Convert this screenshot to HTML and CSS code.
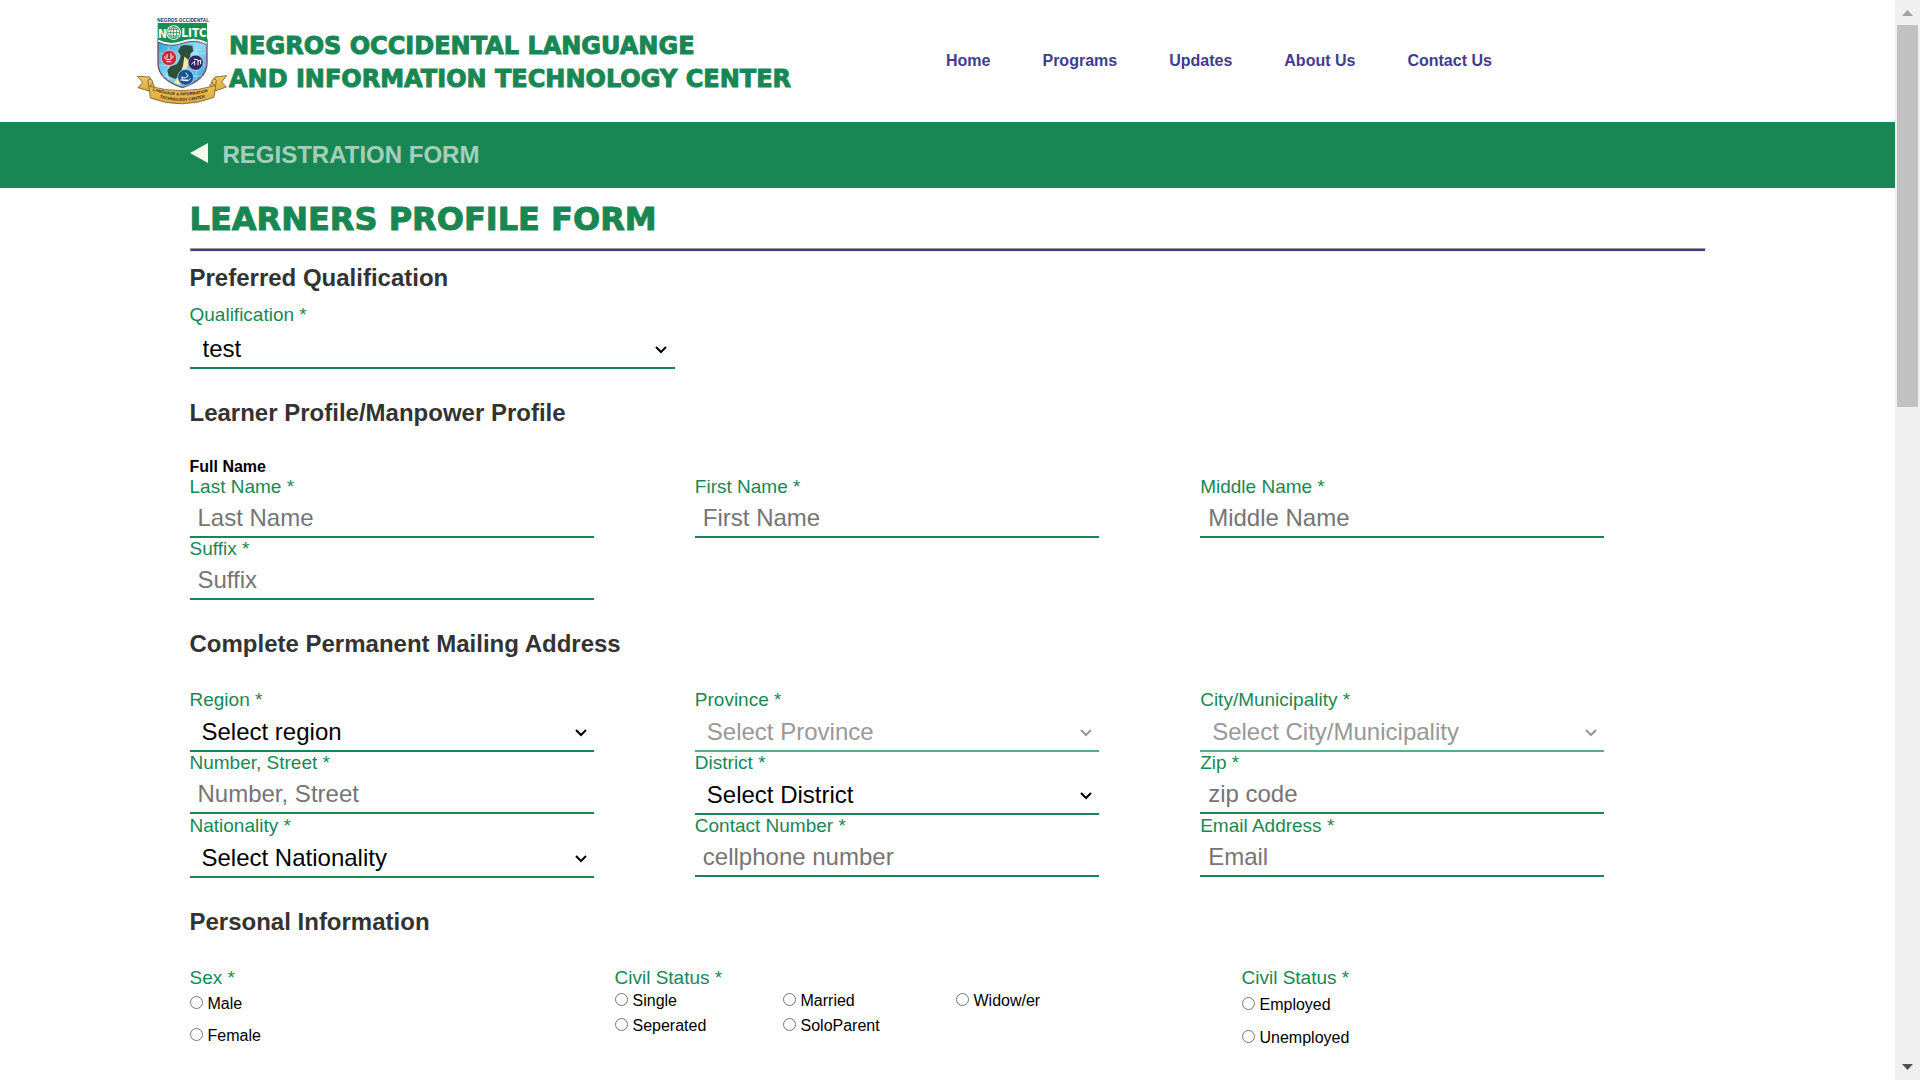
FILE: index.html
```html
<!DOCTYPE html>
<html lang="en">
<head>
<meta charset="utf-8">
<meta name="viewport" content="width=device-width, initial-scale=1">
<title>NOLITC - Registration Form</title>
<link rel="stylesheet" href="styles.css">
</head>
<body>
<header class="site-header">
  <a class="brand" href="#">
    <svg class="brand-logo" viewBox="52 51 270 264" role="img" aria-label="NOLITC seal">
      <defs>
        <linearGradient id="sky" x1="0" y1="0" x2="1" y2="1"><stop offset="0" stop-color="#2a9fd8"/><stop offset=".5" stop-color="#8fdcf5"/><stop offset="1" stop-color="#2196d4"/></linearGradient>
        <linearGradient id="gold" x1="0" y1="0" x2="0" y2="1"><stop offset="0" stop-color="#efc75e"/><stop offset="1" stop-color="#dcab40"/></linearGradient>
        <path id="curve1" d="M95 270Q187 302 282 270"/>
        <path id="curve2" d="M107 289Q187 317 272 287"/>
      </defs>
      <path d="M115 118V190C115 222 137 246 188 263C239 246 262 222 262 190V118Z" fill="url(#sky)" stroke="#77505c" stroke-width="4"/>
      <path d="M119 160H258M119 196H258M128 228H248M146 124V240M180 124V258M230 124V240" stroke="#c4f0fc" stroke-width="1.500" fill="none"/>
      <path d="M183 138L196 135L218 137L221 153L212 161L211 177L197 186L188 203L182 224L167 237L147 229L143 211L153 199L171 193L178 183L183 167L175 154Z" fill="#2c5039"/>
      <path d="M194 170Q207 174 205 192L194 222L178 255L163 249L181 222L189 203Z" fill="#f4eaa2"/>
      <g stroke="#e9eaf0" stroke-width="2">
        <circle cx="148" cy="174" r="23" fill="#c22939"/>
        <circle cx="228" cy="188" r="23" fill="#322863"/>
        <circle cx="198" cy="232" r="24" fill="#18549a"/>
      </g>
      <g fill="none" stroke="#fff" stroke-width="3">
        <path d="M135 169q0 12 13 10t12-12M142 162v13M154 160v15M140 185h15"/>
        <path d="M215 193l10-9v12M223 177l12 3v16M235 184l8-4v13"/>
        <path d="M198 218l8 10-10 6-10-3 5 11h15l6-7M181 240h24"/>
      </g>
      <path d="M114 69H262V128Q225 108 188 123Q150 139 114 120Z" fill="#169052"/>
      <path d="M115 122Q150 140 188 126Q226 112 261 130" fill="none" stroke="#fff" stroke-width="6"/>
      <path d="M115 126Q150 144 188 130Q226 116 261 134" fill="none" stroke="#77505c" stroke-width="3"/>
      <text class="seal-top" x="113" y="65">NEGROS OCCIDENTAL</text>
      <text class="seal-name" x="115" y="114">N</text>
      <text class="seal-name" x="185" y="110">LITC</text>
      <circle cx="162" cy="98" r="22" fill="#fff"/>
      <g fill="none" stroke="#169052" stroke-width="2.500"><circle cx="162" cy="98" r="18"/><ellipse cx="162" cy="98" rx="9" ry="18"/><path d="M144 98h36M162 80v36M148 88h28M148 108h28"/></g>
      <g fill="url(#gold)" stroke="#7b5a2b" stroke-width="2.500" stroke-linejoin="round">
        <path d="M53 229L90 231L104 258L91 274L55 263L69 247Z"/>
        <path d="M321 227L286 231L270 258L284 274L320 261L306 246Z"/>
        <path d="M85 240Q95 232 99 246Q97 255 90 259Q187 286 286 257Q277 252 276 244Q281 232 290 240L283 292Q187 330 92 294Z"/>
      </g>
      <text class="seal-ribbon"><textPath href="#curve1" startOffset="4">LANGUAGE &amp; INFORMATION</textPath></text>
      <text class="seal-ribbon"><textPath href="#curve2" startOffset="14">TECHNOLOGY CENTER</textPath></text>
    </svg>
    <span class="brand-name">NEGROS OCCIDENTAL LANGUANGE<br>AND INFORMATION TECHNOLOGY CENTER</span>
  </a>
  <nav class="site-nav" aria-label="Main">
    <a href="#">Home</a>
    <a href="#">Programs</a>
    <a href="#">Updates</a>
    <a href="#">About Us</a>
    <a href="#">Contact Us</a>
  </nav>
</header>

<div class="title-bar">
  <a class="back" href="#" aria-label="Back"><svg viewBox="0 0 18 20" width="18" height="20"><path d="M0 10L18 0V20Z" fill="#f4f8ef"/></svg></a>
  <span class="title-text">REGISTRATION FORM</span>
</div>

<main>
  <form class="profile-form">
    <h1>LEARNERS PROFILE FORM</h1>
    <hr>
    <h2 class="first">Preferred Qualification</h2>
    <div class="qualification">
      <label for="qualification">Qualification *</label>
      <select id="qualification"><option>test</option></select>
    </div>

    <h2>Learner Profile/Manpower Profile</h2>
    <h3>Full Name</h3>
    <div class="fields">
      <div class="field"><label for="last">Last Name *</label><input id="last" type="text" placeholder="Last Name"></div>
      <div class="field"><label for="first">First Name *</label><input id="first" type="text" placeholder="First Name"></div>
      <div class="field"><label for="middle">Middle Name *</label><input id="middle" type="text" placeholder="Middle Name"></div>
      <div class="field"><label for="suffix">Suffix *</label><input id="suffix" type="text" placeholder="Suffix"></div>
    </div>

    <h2>Complete Permanent Mailing Address</h2>
    <div class="fields">
      <div class="field"><label for="region">Region *</label><select id="region"><option>Select region</option></select></div>
      <div class="field"><label for="province">Province *</label><select id="province" disabled><option>Select Province</option></select></div>
      <div class="field"><label for="city">City/Municipality *</label><select id="city" disabled><option>Select City/Municipality</option></select></div>
      <div class="field"><label for="street">Number, Street *</label><input id="street" type="text" placeholder="Number, Street"></div>
      <div class="field"><label for="district">District *</label><select id="district"><option>Select District</option></select></div>
      <div class="field"><label for="zip">Zip *</label><input id="zip" type="text" placeholder="zip code"></div>
      <div class="field"><label for="nationality">Nationality *</label><select id="nationality"><option>Select Nationality</option></select></div>
      <div class="field"><label for="contact">Contact Number *</label><input id="contact" type="tel" placeholder="cellphone number"></div>
      <div class="field"><label for="email">Email Address *</label><input id="email" type="email" placeholder="Email"></div>
    </div>

    <h2>Personal Information</h2>
    <div class="personal">
      <fieldset>
        <legend>Sex *</legend>
        <div class="stack">
          <label class="choice"><input type="radio" name="sex">Male</label>
          <label class="choice"><input type="radio" name="sex">Female</label>
        </div>
      </fieldset>
      <fieldset>
        <legend>Civil Status *</legend>
        <div class="status">
          <label class="choice"><input type="radio" name="civil">Single</label>
          <label class="choice"><input type="radio" name="civil">Married</label>
          <label class="choice"><input type="radio" name="civil">Widow/er</label>
          <label class="choice"><input type="radio" name="civil">Seperated</label>
          <label class="choice"><input type="radio" name="civil">SoloParent</label>
        </div>
      </fieldset>
      <fieldset>
        <legend>Civil Status *</legend>
        <div class="stack stack-loose">
          <label class="choice"><input type="radio" name="work">Employed</label>
          <label class="choice"><input type="radio" name="work">Unemployed</label>
        </div>
      </fieldset>
    </div>
  </form>
</main>

<div class="scrollbar" aria-hidden="true">
  <svg viewBox="0 0 11 6" width="11" height="6"><path d="M0 6L5.500 0L11 6Z" fill="#a3a3a3"/></svg>
  <div class="thumb"></div>
  <svg viewBox="0 0 11 6" width="11" height="6"><path d="M0 0H11L5.500 6Z" fill="#505050"/></svg>
</div>
</body>
</html>
```
FILE: styles.css
```css
:root {
  --green: #198754;
  --navy: #3f3d8f;
}

* { box-sizing: border-box; }

body {
  margin: 0;
  padding-right: 25px;
  background: #fff;
  color: #000;
  font-family: "Liberation Sans", Arial, sans-serif;
  font-size: 16px;
}

a { text-decoration: none; }

/* Header */
.site-header {
  display: flex;
  align-items: center;
  gap: 155px;
  min-height: 122px;
  padding-left: 137px;
}

.brand {
  display: flex;
  align-items: center;
  gap: 2px;
  color: var(--green);
}

.brand-logo {
  width: 90px;
  height: 88px;
}

.brand-name,
h1 {
  font-family: "DejaVu Sans", Verdana, sans-serif;
  font-weight: 700;
  -webkit-text-stroke: 1px var(--green);
}

.brand-name {
  padding-top: 4px;
  font-size: 24px;
  line-height: 33px;
  white-space: nowrap;
}

.seal-top { font-size: 14px; font-weight: 700; fill: #2d2a6c; }
.seal-name {
  font-family: "Liberation Sans Narrow", "DejaVu Sans Condensed", sans-serif;
  font-size: 35px;
  font-weight: 700;
  fill: #fff;
}
.seal-ribbon { font-size: 12px; font-weight: 700; fill: #33240f; }

.site-nav {
  display: flex;
  gap: 52px;
}

.site-nav a {
  color: var(--navy);
  font-weight: 700;
  white-space: nowrap;
}

/* Green title bar */
.title-bar {
  display: flex;
  align-items: center;
  gap: 15px;
  min-height: 66px;
  padding: 0 10%;
  background: var(--green);
}

.back {
  display: flex;
  padding-bottom: 4px;
}

.title-text {
  color: #fff;
  opacity: 0.6;
  font-size: 24px;
  font-weight: 700;
}

/* Form */
main { padding: 12px 10% 30px; }

h1 {
  margin: 0 0 10px;
  color: var(--green);
  font-size: 32px;
  line-height: 38px;
}

hr {
  height: 4px;
  margin: 0;
  border: 1px solid;
  border-color: #999 #eee #eee #999;
  background: var(--navy);
}

h2 {
  margin: 29px 0 31px;
  color: #333;
  font-size: 24px;
  line-height: 29px;
}

h2.first { margin: 11px 0 12px; }

h3 {
  margin: 0;
  font-size: 16px;
  line-height: 18px;
}

.qualification { width: 32%; }

.fields {
  display: grid;
  grid-template-columns: repeat(3, 1fr);
  align-items: start;
}

.field { width: 80%; }

.field label,
.qualification label,
legend {
  display: block;
  padding: 0;
  color: var(--green);
  font-size: 19px;
  line-height: 22px;
}

input[type="text"],
input[type="tel"],
input[type="email"],
select {
  display: block;
  width: 100%;
  height: 40px;
  border: 0;
  border-bottom: 2px solid var(--green);
  border-radius: 0;
  padding: 2px 8px 0;
  background: transparent;
  font-family: inherit;
  font-size: 24px;
}

::placeholder { color: #757575; }

select {
  height: 41px;
  padding: 2px 12px 0;
  appearance: none;
  background: url("data:image/svg+xml,%3Csvg xmlns='http://www.w3.org/2000/svg' width='12' height='8'%3E%3Cpath d='M1 1l5 5 5-5' fill='none' stroke='black' stroke-width='2'/%3E%3C/svg%3E") no-repeat right 7px top 18px;
  color: #000;
}

select:disabled {
  background-image: url("data:image/svg+xml,%3Csvg xmlns='http://www.w3.org/2000/svg' width='12' height='8'%3E%3Cpath d='M1 1l5 5 5-5' fill='none' stroke='%236d6d6d' stroke-width='2'/%3E%3C/svg%3E");
  opacity: 0.7;
  color: #6d6d6d;
}

.qualification select {
  height: 43px;
  padding: 3px 13px 0;
  background-position: right 8px top 20px;
}

/* Radio groups */
.personal {
  display: grid;
  grid-template-columns: 425fr 627fr 464fr;
}

fieldset {
  min-width: 0;
  margin: 0;
  border: 0;
  padding: 0;
}

.stack {
  display: grid;
  gap: 14px;
  padding-top: 6px;
}

.stack-loose {
  gap: 15px;
  padding-top: 7px;
}

.status {
  display: grid;
  grid-template-columns: 168px 173px auto;
  gap: 7px 0;
  padding-top: 3px;
}

.choice {
  display: flex;
  align-items: center;
  gap: 5px;
  line-height: 18px;
}

.choice input {
  width: 13px;
  height: 13px;
  margin: 0 0 3px;
}

/* Scroll track at the window edge */
.scrollbar {
  position: fixed;
  top: 0;
  right: 0;
  bottom: 0;
  display: flex;
  flex-direction: column;
  align-items: center;
  gap: 9px;
  width: 25px;
  padding: 10px 2px;
  background: #f0f0f0;
}

.thumb {
  width: 100%;
  height: 36%;
  background: #c1c1c1;
}

.scrollbar svg:last-child { margin-top: auto; }
```
